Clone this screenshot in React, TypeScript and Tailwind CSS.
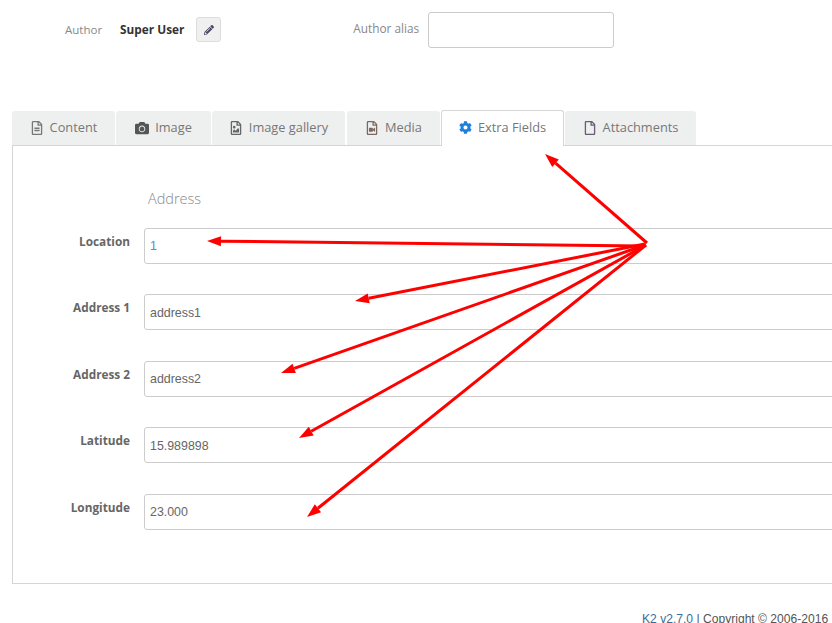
import { FaCamera, FaCog, FaPencilAlt, FaRegFile, FaRegFileAlt, FaRegFileImage, FaRegFileVideo } from "react-icons/fa"

const tabs = [
  { label: "Content", icon: <FaRegFileAlt className="text-[14px] text-[#777]" />, tabClass: "w-[103px] mr-[1px]" },
  { label: "Image", icon: <FaCamera className="text-[14px] text-[#555]" />, tabClass: "w-[95px] mr-[1px]" },
  { label: "Image gallery", icon: <FaRegFileImage className="text-[14px] text-[#666]" />, tabClass: "w-[133px] mr-[2px]" },
  { label: "Media", icon: <FaRegFileVideo className="text-[14px] text-[#7a6a62]" />, tabClass: "w-[93px] mr-[1px]" },
]

const fields = [
  { label: "Location", value: "1", rowClass: "", valueClass: "text-[#5b8db0]" },
  { label: "Address 1", value: "address1", rowClass: "mt-[30px]", valueClass: "text-[#666] pt-[2px]" },
  { label: "Address 2", value: "address2", rowClass: "mt-[31px]", valueClass: "text-[#666]" },
  { label: "Latitude", value: "15.989898", rowClass: "mt-[30px]", valueClass: "text-[#666] pt-[2px]" },
  { label: "Longitude", value: "23.000", rowClass: "mt-[31px]", valueClass: "text-[#666]" },
]

const arrows = [
  { x: 545, y: 154, ox: 647, oy: 243 },
  { x: 207, y: 241, ox: 642, oy: 246 },
  { x: 355, y: 301, ox: 645, oy: 244 },
  { x: 281, y: 373, ox: 645, oy: 245 },
  { x: 299, y: 438, ox: 646, oy: 245 },
  { x: 307, y: 517, ox: 646, oy: 245 },
]

function Arrow({ x, y, ox, oy }: { x: number; y: number; ox: number; oy: number }) {
  const len = Math.hypot(ox - x, oy - y)
  const ux = (ox - x) / len
  const uy = (oy - y) / len
  const bx = x + ux * 14
  const by = y + uy * 14
  const px = -uy * 5
  const py = ux * 5
  return (
    <g>
      <line x1={ox} y1={oy} x2={bx} y2={by} stroke="#ff0000" strokeWidth="3" />
      <polygon points={`${x},${y} ${bx + px},${by + py} ${bx - px},${by - py}`} fill="#ff0000" />
    </g>
  )
}

export default function App() {
  return (
    <div className="relative w-[832px] h-[623px] overflow-hidden bg-white font-['Open_Sans',sans-serif]">
      {/* Author row */}
      <div className="flex items-start h-[110px] pt-3">
        <span className="ml-[65px] mt-[9px] text-[11.5px] leading-[17px] text-[#888]">Author</span>
        <span className="ml-[18px] mt-[9px] text-[11.8px] leading-[17px] font-bold text-[#333]">Super User</span>
        <button className="ml-3 mt-[5px] w-[25px] h-[25px] flex items-center justify-center rounded-[3px] border border-[#ddd] bg-[#f0f0f0]">
          <FaPencilAlt className="text-[10px] text-[#4a4a6a]" />
        </button>
        <span className="ml-[132px] mt-2 text-[11.8px] leading-[17px] text-[#888]">Author alias</span>
        <div className="ml-[9px] w-[186px] h-[36px] rounded-[3px] border border-[#ccc] bg-white" />
      </div>

      {/* Tabs */}
      <div className="relative z-10 flex items-end h-[36px] ml-3">
        {tabs.map((t) => (
          <div
            key={t.label}
            className={`${t.tabClass} h-[34px] mb-[1px] flex items-center justify-center gap-[6px] rounded-t-[3px] bg-[#eef0f0] text-[12.8px] text-[#777]`}
          >
            {t.icon}
            <span>{t.label}</span>
          </div>
        ))}
        <div className="w-[123px] h-[36px] pb-[2px] flex items-center justify-center gap-[6px] rounded-t-[3px] border border-b-0 border-[#d5d5d5] bg-white text-[12.8px] text-[#777]">
          <FaCog className="text-[13px] text-[#1e7fe0]" />
          <span>Extra Fields</span>
        </div>
        <div className="ml-[1px] w-[131px] h-[34px] mb-[1px] flex items-center justify-center gap-[6px] rounded-t-[3px] bg-[#eef0f0] text-[12.8px] text-[#777]">
          <FaRegFile className="text-[14px] text-[#6b5b70]" />
          <span>Attachments</span>
        </div>
      </div>

      {/* Panel */}
      <div className="-mt-[1px] ml-3 w-[900px] h-[439px] border border-[#d5d5d5] bg-white pt-[43px]">
        <h3 className="ml-[135px] text-[14.5px] leading-[19px] font-light text-[#888]">Address</h3>
        <div className="mt-[20px]">
          {fields.map((f) => (
            <div key={f.label} className={`flex items-start ${f.rowClass}`}>
              <label className="w-[117px] mt-[5px] text-right text-[11.8px] leading-[17px] font-bold text-[#666]">
                {f.label}
              </label>
              <div
                className={`ml-[14px] w-[760px] h-[36px] flex items-center rounded-[3px] border border-[#ccc] bg-white pl-[5px] font-['Liberation_Sans',sans-serif] text-[12.4px] ${f.valueClass}`}
              >
                {f.value}
              </div>
            </div>
          ))}
        </div>
      </div>

      {/* Footer */}
      <p className="mt-[28px] ml-[642px] whitespace-nowrap font-['Liberation_Sans',sans-serif] text-[12.1px] leading-[14px] text-[#555]">
        <span className="text-[#3a6d94]">K2 v2.7.0</span> | Copyright © 2006-2016
      </p>

      {/* Annotation arrows */}
      <svg className="absolute inset-0 z-20 pointer-events-none" width="832" height="623">
        {arrows.map((a) => (
          <Arrow key={a.y} x={a.x} y={a.y} ox={a.ox} oy={a.oy} />
        ))}
      </svg>
    </div>
  )
}
